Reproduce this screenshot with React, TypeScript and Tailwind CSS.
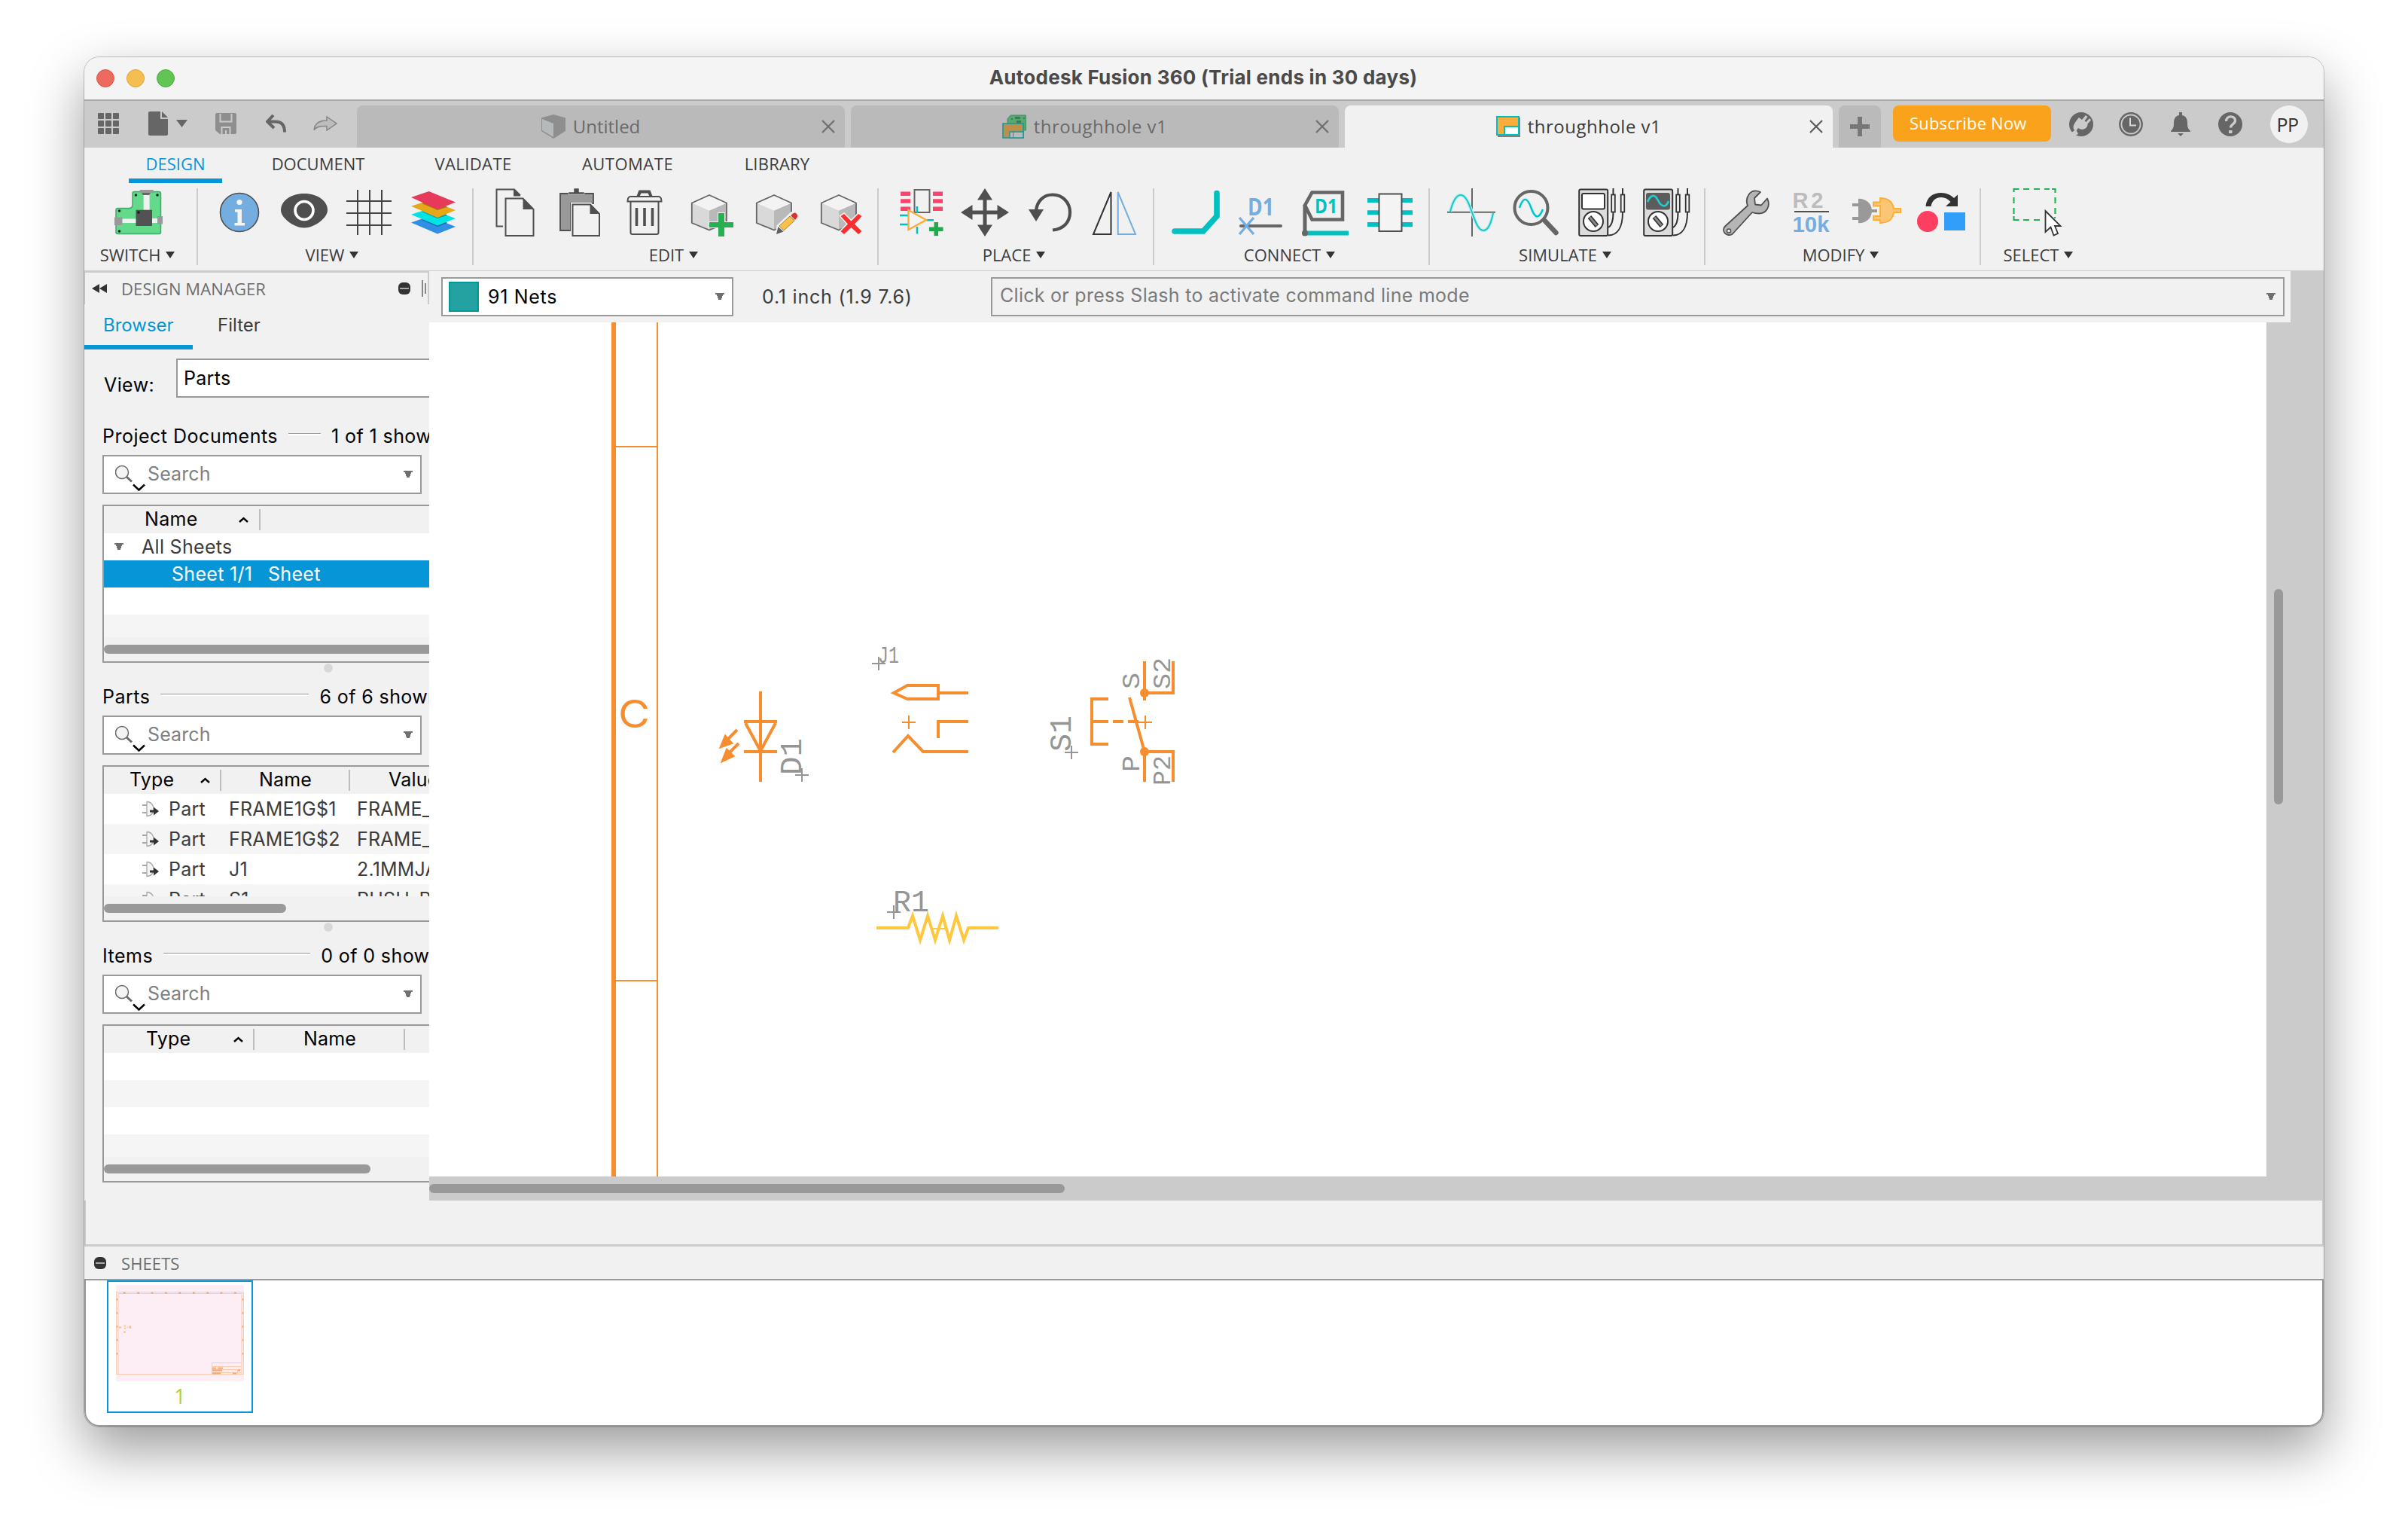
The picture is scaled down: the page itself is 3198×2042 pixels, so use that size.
import React from "react";

const G = "#4f4f4f";
const TEAL = "#00c0c0";
const SKY = "#74ade0";

type Kids = { children?: React.ReactNode };

function Ic({ children }: Kids) {
  return (
    <div className="flex w-[86px] justify-center">
      <svg className="h-16 w-16 overflow-visible" viewBox="0 0 64 64" fill="none">
        {children}
      </svg>
    </div>
  );
}

function Cube({ children }: Kids) {
  return (
    <Ic>
      <path d="M32 29.5L9 19.5V46L32 55.5z" fill="#d9d9d9" />
      <path d="M32 29.5L55 19.5V46L32 55.5z" fill="#b9b9b9" />
      <path d="M32 9L9 19.5l23 10 23-10z" fill="#f3f3f3" />
      <path d="M32 9L8.8 19.5V46L32 55.5 55 46V19.5z" stroke="#666" strokeWidth="1.8" strokeLinejoin="round" />
      {children}
    </Ic>
  );
}

function Meter({ scope }: { scope?: boolean }) {
  return (
    <Ic>
      <rect x="3.2" y="1.4" width="38" height="61.6" rx="2" fill="#dcdcdc" stroke="#333" strokeWidth="2" />
      <rect x="7" y="7" width="30" height="20.5" rx="2" fill={scope ? "#5c5c5c" : "#fff"} stroke={scope ? "#5c5c5c" : "#333"} strokeWidth="2" />
      {scope && <path d="M8 18C13 7 18 8 22 16S32 27 36 17" stroke="#1fd0d0" strokeWidth="2.6" />}
      <circle cx="22" cy="44" r="13" fill="#fff" stroke="#333" strokeWidth="2" />
      <path d="M17 38l10 12" stroke="#333" strokeWidth="6" />
      <path d="M17.5 38.6l9 10.8" stroke="#8a8a8a" strokeWidth="3" />
      <path d="M48.5 0v8M61 0v8M48.5 32C48.5 42 47 49 42 52M61 32C61 52 54 62.5 42 62.5" stroke="#333" strokeWidth="2" />
      <rect x="46.2" y="8.5" width="4.6" height="23" fill="#f1f1f1" stroke="#333" strokeWidth="1.8" />
      <rect x="58.7" y="8.5" width="4.6" height="23" fill="#f1f1f1" stroke="#333" strokeWidth="1.8" />
    </Ic>
  );
}

function Down() {
  return (
    <svg className="h-2.5 w-3 shrink-0" viewBox="0 0 12 10">
      <path d="M0 0h12v2h-2v2H9v3H8v2H4V7H3V4H2V2H0z" fill="#6f6f6f" />
    </svg>
  );
}

function Up() {
  return (
    <svg className="h-2 w-[13px] shrink-0" viewBox="0 0 13 8" fill="none">
      <path d="M1 7l5.5-5L12 7" stroke="#000" strokeWidth="2.4" />
    </svg>
  );
}

function Group({
  label,
  width,
  icons,
  className = "",
  shift = "pr-[5px]",
}: {
  label: string;
  width: string;
  icons: React.ReactNode;
  className?: string;
  shift?: string;
}) {
  return (
    <div className={`flex flex-col ${width}`}>
      <div className={`flex h-16 ${className}`}>{icons}</div>
      <div className={`mt-[13px] flex h-[22px] items-center justify-center gap-[7px] text-[22px] leading-none text-[#3c3c3c] ${shift}`}>
        <span>{label}</span>
        <svg className="h-[9px] w-3" viewBox="0 0 12 9">
          <path d="M0 0h12L6 9z" fill="#333" />
        </svg>
      </div>
    </div>
  );
}

const Sep = () => <div className="h-[102px] w-0.5 bg-[#cbcbcb]" />;

function Tab({ icon, text, active, tracking = "tracking-[0.5px]" }: { icon: React.ReactNode; text: string; active?: boolean; tracking?: string }) {
  return (
    <div className={`flex h-14 w-[648px] items-center rounded-t-lg pr-[13px] ${active ? "bg-[#f1f1f1] text-[#3c3c3c]" : "bg-[#bababa] text-[#6a6a6a]"}`}>
      <div className="flex flex-1 items-center justify-center gap-[10px] pl-[4px]">
        {icon}
        <span className={`text-[24px] leading-none ${tracking}`}>{text}</span>
      </div>
      <svg className="h-[18px] w-[18px]" viewBox="0 0 18 18">
        <path d="M1 1l16 16M17 1L1 17" stroke={active ? "#5a5a5a" : "#6f6f6f"} strokeWidth="2.2" />
      </svg>
    </div>
  );
}

function Ribbon() {
  return (
    <div className="h-[163px] bg-[#f1f1f1]">
      <div className="flex h-[47px] pl-[59px] text-[22px] leading-none text-[#3c3c3c]">
        <div className="flex w-[124px] justify-center border-b-[6px] border-[#0696d7] pt-[10px] text-[#0696d7]">DESIGN</div>
        <div className="ml-[42px] w-[171px] pt-[10px] text-center">DOCUMENT</div>
        <div className="ml-[44px] w-[153px] pt-[10px] text-center tracking-[0.4px]">VALIDATE</div>
        <div className="ml-[43px] w-[171px] pt-[10px] text-center tracking-[0.5px]">AUTOMATE</div>
        <div className="ml-[46px] w-[134px] pt-[10px] text-center tracking-[0.2px]">LIBRARY</div>
      </div>
      <div className="flex pt-[7px]">
        <Group
          label="SWITCH"
          width="w-[149px]"
          className="pl-[29px]"
          shift="pr-[8px]"
          icons={
            <Ic>
              <path d="M24 7q0-2.500 2.500-2.500H59q2.500 0 2.500 2.500V58q0 2.500-2.500 2.500H4.500Q2 60.500 2 58V29q0-2.500 2.500-2.500H20q4-.5 4-5z" fill="#62d98b" stroke="#43a869" strokeWidth="1.5" />
              <path d="M38.600 6h8v30h-8zM10 40.500h20V46H10zM50 40h7v6h-7z" fill="#f1f1f1" />
              <path d="M28.500 28.700H50V50H28.500z" fill="#525252" />
              <path d="M33.700 2h18v4h-18zM0 38.500h10.500v10.500H0zM57 37h7v10.500h-7z" fill="#999" />
              <path d="M36 6h12l-2 3h-8z" fill="#666" />
              <g fill="#1c1c1c"><circle cx="28.400" cy="9" r="1.800" /><circle cx="57" cy="9" r="1.800" /><circle cx="6.500" cy="30" r="1.800" /><circle cx="6.500" cy="57" r="1.800" /><circle cx="32" cy="32" r="1.800" /></g>
            </Ic>
          }
        />
        <Sep />
        <Group
          label="VIEW"
          width="w-[364px]"
          className="pl-[12px]"
          shift="pr-[8px]"
          icons={
            <>
              <Ic>
                <circle cx="32" cy="32" r="25.500" fill={SKY} stroke={G} strokeWidth="1.600" />
                <circle cx="32" cy="18.500" r="3.600" fill="#f4f4f4" />
                <path d="M26 28h9v18h4v3.500H25.500V46h4V31.500H26z" fill="#f4f4f4" />
              </Ic>
              <Ic>
                <path d="M1 29C1 17 14 7 32 7s31 10 31 22c0 10-17 23.500-31 23.500S1 39 1 29z" fill={G} />
                <circle cx="32" cy="29.500" r="12" fill={G} stroke="#fff" strokeWidth="3.600" />
              </Ic>
              <Ic>
                <path d="M17 2v60M33 2v60M49 2v60M2 17h60M2 33h60M2 49h60" stroke="#444" strokeWidth="2" />
              </Ic>
              <Ic>
                <path d="M2 45.500L26 37l35 14-24 9.500z" fill="#2f8fe6" />
                <path d="M16 42l21-6 13 10-13 5z" fill="#1d68ad" />
                <path d="M2 34.700L26 27l35 13-24 9.500z" fill="#00e3e3" />
                <path d="M16 31l21-6 13 11-13 4z" fill="#00a3a3" />
                <path d="M2 23.700L26 16l35 13-24 10z" fill="#e6a817" />
                <path d="M16 20l21-6 13 11-13 4z" fill="#a87607" />
                <path d="M2 12L25.600 4 61 18.500l-24 9.500z" fill="#e73a5b" />
              </Ic>
            </>
          }
        />
        <Sep />
        <Group
          label="EDIT"
          width="w-[536px]"
          className="pl-[12px]"
          icons={
            <>
              <Ic>
                <path d="M16 50.500H7.500V1.500H31l8 8" stroke={G} strokeWidth="2" />
                <path d="M30 1l9.500 9.500H30z" fill={G} />
                <path d="M19.500 13.500h23l14 14.500v35h-37z" stroke={G} strokeWidth="2" />
                <path d="M42.500 13v15H57z" fill={G} />
              </Ic>
              <Ic>
                <path d="M6 7h44v13H40l-20 0v36H6z" fill="#999" stroke={G} strokeWidth="1.800" />
                <path d="M17 8V5h7V0h7v5h7v3z" fill={G} stroke="#f1f1f1" strokeWidth="0.500" />
                <path d="M22.500 21.500H46L58 34v29H22.500z" fill="#f1f1f1" stroke="#f1f1f1" strokeWidth="5" />
                <path d="M22.500 21.500H46L58 34v29H22.500z" stroke={G} strokeWidth="2" />
                <path d="M45.500 21v13H58z" fill={G} />
              </Ic>
              <Ic>
                <path d="M21.500 10.500l3-8h15l3 8-4 0-2-4h-9l-2 4z" fill={G} />
                <path d="M9.500 17.500q0-6.500 4-6.500h37q4 0 4 6.500z" stroke={G} strokeWidth="2" />
                <path d="M13.500 17.500v41q0 2.500 2.500 2.500h32q2.500 0 2.500-2.500v-41" stroke={G} strokeWidth="2" />
                <path d="M21.500 26v24M32 26v24M42.500 26v24" stroke={G} strokeWidth="3.600" />
              </Ic>
              <Cube>
                <path d="M44 33h8v12h12v7H52v12h-8V52H32v-7h12z" fill="#27b050" stroke="#f1f1f1" strokeWidth="2" paintOrder="stroke" />
              </Cube>
              <Cube>
                <path d="M35 61l2-11 18-17q4-3 7 1 2 3-1 6L43 57z" fill="#f1f1f1" stroke="#f1f1f1" strokeWidth="3" />
                <path d="M39 50l14-13 6 6-14 13z" fill="#fbc04a" stroke="#a8823a" strokeWidth="1" />
                <path d="M54 36l3-2.500q3-2 5 .5 2.500 2.500 0 5.500L60 42z" fill="#d8322f" />
                <path d="M35 61l2.500-10 7 6.500z" fill="#5f5f5f" />
              </Cube>
              <Cube>
                <path d="M34.500 37l4.500-3 9.500 9.500L58 34l4.500 3-9.500 10.500L62.500 57 58 61l-9.500-9L39 61l-4.500-4 9.500-9.500z" fill="#fb2d2d" stroke="#f1f1f1" strokeWidth="3" paintOrder="stroke" />
              </Cube>
            </>
          }
        />
        <Sep />
        <Group
          label="PLACE"
          width="w-[364px]"
          className="pl-[12px]"
          icons={
            <>
              <Ic>
                <path d="M6 7.300h13M6 17h13M6 27.300h13M49 7.300h13M49 17h13M49 27.300h13" stroke="#ff426d" strokeWidth="5.500" />
                <path d="M24.500 2h20v30h-20z" stroke="#666" strokeWidth="2" />
                <path d="M28 24v9M28 51v9.500M5 36h11M5 48h11M41 42.300h9" stroke={TEAL} strokeWidth="2.500" />
                <path d="M16.500 29v26L40 42z" fill="#f4f4f4" stroke="#fbad35" strokeWidth="2.400" />
                <path d="M50.500 45h5.500v6.500h6.500V57H56v6h-5.500v-6H44v-5.500h6.500z" fill="#22a94c" />
              </Ic>
              <Ic>
                <path d="M32 0l10 15.500h-7.500v14h14V22L64 32 48.500 42v-7.500h-14v14H42L32 64 22 48.500h7.500v-14h-14V42L0 32l15.500-10v7.500h14v-14H22z" fill={G} />
              </Ic>
              <Ic>
                <path d="M14 30C15 17 24 8.500 36 8.500c13 0 23 10 23 23.500 0 13-9 22.500-23 23.500" stroke={G} strokeWidth="4.200" />
                <path d="M4 28h20L14 44z" fill={G} />
              </Ic>
              <Ic>
                <path d="M27.500 5v56H4z" stroke="#333" strokeWidth="2" />
                <path d="M36.700 5v56H60z" stroke={SKY} strokeWidth="2" />
              </Ic>
            </>
          }
        />
        <Sep />
        <Group
          label="CONNECT"
          width="w-[364px]"
          className="pl-[12px]"
          icons={
            <>
              <Ic>
                <path d="M60 6.500V37L42 57H4" stroke={TEAL} strokeWidth="7.600" strokeLinecap="round" />
              </Ic>
              <Ic>
                <path d="M6 50h53" stroke="#666" strokeWidth="4" strokeLinecap="round" />
                <path d="M4 39l19 22M23 39L4 61" stroke={SKY} strokeWidth="3.400" />
                <text x="15" y="35.500" fontSize="32" fontWeight="700" fill={SKY} textLength="35" lengthAdjust="spacingAndGlyphs">D1</text>
              </Ic>
              <Ic>
                <path d="M5 22.500l9.500-17H55v36H14.500z" stroke="#666" strokeWidth="4.600" />
                <path d="M5 22v37" stroke="#666" strokeWidth="5" />
                <path d="M2 59.500h61" stroke={TEAL} strokeWidth="6" />
                <circle cx="5" cy="59.500" r="4" fill="#666" />
                <text x="18" y="32.500" fontSize="26" fontWeight="700" fill={TEAL} textLength="30" lengthAdjust="spacingAndGlyphs">D1</text>
              </Ic>
              <Ic>
                <path d="M2 16h15M2 32.300h15M2 48h15M47 16h15M47 32.300h15M47 48h15" stroke={TEAL} strokeWidth="6" />
                <path d="M17.500 7.500h30v49.500h-30z" fill="#f4f4f4" stroke={G} strokeWidth="2" />
              </Ic>
            </>
          }
        />
        <Sep />
        <Group
          label="SIMULATE"
          width="w-[364px]"
          className="pl-[12px]"
          icons={
            <>
              <Ic>
                <path d="M33 0v64M0 31.700h64" stroke="#666" strokeWidth="2" />
                <path d="M4 31C8 15 13 9 18 9c7 0 11 12 15 23s8 24 15 24c6 0 10-8 13-23" stroke="#b4efef" strokeWidth="4.500" />
                <path d="M4 31C8 15 13 9 18 9c7 0 11 12 15 23s8 24 15 24c6 0 10-8 13-23" stroke="#1fc7c7" strokeWidth="2" />
              </Ic>
              <Ic>
                <circle cx="25.500" cy="26" r="22" stroke="#666" strokeWidth="4" />
                <path d="M44 43.500L58.500 59" stroke="#666" strokeWidth="6.500" strokeLinecap="round" />
                <path d="M10 26c5-15 10-15 15.500 0s10 15 15.500 2" stroke="#b4efef" strokeWidth="4" />
                <path d="M10 26c5-15 10-15 15.500 0s10 15 15.500 2" stroke={TEAL} strokeWidth="2.200" />
              </Ic>
              <Meter />
              <Meter scope />
            </>
          }
        />
        <Sep />
        <Group
          label="MODIFY"
          width="w-[364px]"
          className="pl-[12px]"
          icons={
            <>
              <Ic>
                <path d="M50 5L42 13l1 8.500 8 1 8-9c5 10-1 20-11 20-3 0-6-.5-9-1.500L13 60.500C9 64 1 61 1 55c0-2 1-3.500 2-4.500L33 23c-4-10 3-24 17-18z" fill="#b5b5b5" stroke={G} strokeWidth="1.800" strokeLinejoin="round" />
                <circle cx="8" cy="56.500" r="2.600" fill="#f1f1f1" stroke={G} strokeWidth="1.500" />
              </Ic>
              <Ic>
                <text x="6.500" y="25.500" fontSize="29" fontWeight="700" fill="#bcbcbc" textLength="41" lengthAdjust="spacing" className="font-['Liberation_Sans']">R2</text>
                <path d="M9 31h46" stroke={G} strokeWidth="2" />
                <text x="6.500" y="58" fontSize="30" fontWeight="700" fill={SKY} textLength="49" lengthAdjust="spacingAndGlyphs" className="font-['Liberation_Sans']">10k</text>
              </Ic>
              <Ic>
                <path d="M0 20h8v-6.300c24 0 24 32.600 0 32.600V42H0v-4h8V24H0zM25 28h8v4h-8z" fill="#999" />
                <path d="M28 18.500h9V13c14 0 17 8 18 14h9v5h-9c-1 8-5 14-18 14v-4h-9v-5h9V23.500h-9z" fill="#fcc573" stroke="#fbad35" strokeWidth="1.800" />
              </Ic>
              <Ic>
                <circle cx="14" cy="44" r="14" fill="#ff3f62" />
                <path d="M36 32h28v24H36z" fill="#339efa" />
                <path d="M11.500 24C12.500 12 21 6 32 6c7 0 13 3 17 7l5-4.500V24H38l6.500-6C41 14 37 12 32 12c-7 0-12 4-13.500 12z" fill="#333" />
              </Ic>
            </>
          }
        />
        <Sep />
        <Group
          label="SELECT"
          width="w-[160px]"
          className="pl-[31px]"
          shift="pr-[8px]"
          icons={
            <Ic>
              <path d="M1.500 5V1h7M14 1h8M28 1h8M42 1h7M52 1h4.500v5M56.500 12v8M56.500 26v8M1.500 12v8M1.500 26v8M1.500 37v5h7M14 42h8M28 42h8M56 38v2" stroke="#25b154" strokeWidth="2.200" />
              <path d="M43.500 30v28l7-6.500 4 11 5.500-2.500-4-10h7.500z" fill="#fff" stroke="#333" strokeWidth="1.800" />
            </Ic>
          }
        />
      </div>
    </div>
  );
}

const Minus = () => (
  <svg className="h-4 w-4 shrink-0" viewBox="0 0 16 16">
    <rect width="16" height="16" rx="6" fill="#333" />
    <path d="M2 8h12" stroke="#aaa" strokeWidth="2" />
  </svg>
);

function SearchBox() {
  return (
    <div className="flex h-[52px] w-[424px] items-center border-2 border-[#999] bg-white pr-[10px] pl-[15px]">
      <svg className="mt-[10px] h-9 w-10 shrink-0" viewBox="0 0 40 36" fill="none">
        <circle cx="9" cy="10" r="8.500" fill="#f4f4f4" stroke="#6a6a6a" strokeWidth="1.500" />
        <path d="M15 16l7 6.500" stroke="#6a6a6a" strokeWidth="3" />
        <path d="M24 26.500l7.500 7 7.500-7" stroke="#000" strokeWidth="2.400" />
      </svg>
      <span className="ml-[3px] flex-1 pb-px text-[25px] leading-none tracking-[0.1px] text-[#808080]">Search</span>
      <Down />
    </div>
  );
}

function SectionHead({ title, count, line }: { title: string; count: string; line: string }) {
  return (
    <div className="flex h-6 items-center text-[25px] leading-none whitespace-nowrap text-black">
      <span className="tracking-[0.5px]">{title}</span>
      <div className={`mb-[6px] h-[3px] shrink-0 border-t border-[#999] bg-white ${line}`} />
      <span className="ml-[14px] tracking-[0.4px]">{count}</span>
    </div>
  );
}

const Bar = () => <div className="h-7 w-0.5 shrink-0 bg-[#bdbdbd]" />;

const Dot = () => <div className="ml-[294px] h-3 w-3 rounded-full bg-[#d8d8d8]" />;

function PartRow({ name, value, bg }: { name: string; value: string; bg: string }) {
  return (
    <div className={`flex h-10 shrink-0 items-center text-[#3c3c3c] ${bg}`}>
      <svg className="ml-[51px] h-[22px] w-[22px] shrink-0" viewBox="0 0 22 22" fill="none">
        <path d="M0 6h6M0 16h6" stroke="#8a8a8a" strokeWidth="1.500" />
        <path d="M6 1.500v19c12 0 12-19 0-19z" fill="#f4f4f4" stroke="#aaa" strokeWidth="1.300" />
        <path d="M10 12.500h5V8.500l7 5.500-7 5.500v-4h-5z" fill="#333" />
      </svg>
      <span className="ml-[13px] w-[80px] shrink-0">Part</span>
      <span className="w-[170px] shrink-0">{name}</span>
      <span className="whitespace-nowrap">{value}</span>
    </div>
  );
}

function Manager() {
  return (
    <div className="flex h-[1234px] w-[458px] shrink-0 flex-col overflow-hidden bg-[#f1f1f1] font-['Inter',sans-serif]">
      <div className="flex h-11 items-center border-t-2 border-r-2 border-l border-[#cbcbcb] pr-[1px] pl-[9px]">
        <svg className="h-3 w-5" viewBox="0 0 20 12">
          <path d="M0 6L10 0v12zM10 6L20 0v12z" fill="#333" />
        </svg>
        <span className="ml-[19px] flex-1 font-['Open_Sans',sans-serif] text-[22px] leading-none tracking-[0.1px] text-[#6c6c6c]">DESIGN MANAGER</span>
        <Minus />
        <div className="ml-[15px] h-[22px] w-0.5 bg-[#888]" />
        <div className="mr-[1px] ml-[2px] h-[14px] w-0.5 bg-[#888]" />
      </div>
      <div className="flex h-[60px] text-[24px] leading-none">
        <div className="w-36 border-b-[6px] border-[#0696d7] pt-4 pl-[25px] text-[#0696d7]">Browser</div>
        <div className="pt-4 pl-[33px] text-[#3c3c3c]">Filter</div>
      </div>
      <div className="mt-3 flex h-[52px] items-center pl-[26px] text-[25px] leading-none text-black">
        <span className="mt-[18px] w-24 tracking-[0.4px]">View:</span>
        <div className="flex h-[52px] flex-1 items-center border-2 border-r-0 border-[#999] bg-white pl-[8px] text-[25px] tracking-[0.3px]">Parts</div>
      </div>
      <div className="pt-[39px] pl-6">
        <SectionHead title="Project Documents" count="1 of 1 shown" line="ml-[14px] w-[43px]" />
        <div className="mt-[13px]">
          <SearchBox />
        </div>
        <div className="mt-[14px] flex h-[210px] flex-col border-2 border-r-0 border-[#999] bg-[#f1f1f1] text-[25px] leading-none tracking-[0.3px] text-[#3c3c3c]">
          <div className="flex h-9 shrink-0 items-center text-black">
            <span className="ml-[54px] w-[125px] pb-px">Name</span>
            <Up />
            <div className="ml-[14px]" />
            <Bar />
          </div>
          <div className="flex h-9 shrink-0 items-center bg-white pl-[14px]">
            <Down />
            <span className="ml-[24px]">All Sheets</span>
          </div>
          <div className="flex h-9 shrink-0 items-center bg-[#0696d7] pl-[90px] text-white">
            <span className="w-[128px]">Sheet 1/1</span>
            <span>Sheet</span>
          </div>
          <div className="h-9 shrink-0 bg-white" />
          <div className="h-[30px] shrink-0 bg-[#f5f5f5]" />
          <div className="mt-[10px] -mr-4 h-3 shrink-0 rounded-full bg-[#999]" />
        </div>
        <div className="pt-[1px]">
          <Dot />
        </div>
      </div>
      <div className="pt-[20px] pl-6">
        <SectionHead title="Parts" count="6 of 6 shown" line="ml-[14px] w-[197px]" />
        <div className="mt-[13px]">
          <SearchBox />
        </div>
        <div className="mt-[14px] flex h-[208px] flex-col border-2 border-r-0 border-[#999] bg-[#f1f1f1] text-[25px] leading-none tracking-[0.2px]">
          <div className="flex h-9 shrink-0 items-center text-black">
            <span className="ml-[34px] w-[94px] shrink-0 pb-px">Type</span>
            <Up />
            <div className="w-[13px] shrink-0" />
            <Bar />
            <span className="ml-[50px] w-[119px] shrink-0 pb-px">Name</span>
            <Bar />
            <span className="ml-[51px] shrink-0 pb-px">Value</span>
          </div>
          <div className="flex h-[136px] shrink-0 flex-col overflow-hidden">
            <PartRow name="FRAME1G$1" value="FRAME_A_L" bg="bg-white" />
            <PartRow name="FRAME1G$2" value="FRAME_A_L" bg="bg-[#f5f5f5]" />
            <PartRow name="J1" value="2.1MMJACK" bg="bg-white" />
            <PartRow name="S1" value="PUSH_BUTTON" bg="bg-[#f5f5f5]" />
          </div>
          <div className="mt-[10px] h-3 w-[242px] shrink-0 rounded-full bg-[#999]" />
        </div>
        <div className="pt-[1px]">
          <Dot />
        </div>
      </div>
      <div className="pt-[20px] pl-6">
        <SectionHead title="Items" count="0 of 0 shown" line="ml-[14px] w-[195px]" />
        <div className="mt-[13px]">
          <SearchBox />
        </div>
        <div className="mt-[14px] flex h-[210px] flex-col border-2 border-r-0 border-[#999] bg-[#f1f1f1] text-[25px] leading-none tracking-[0.2px]">
          <div className="flex h-9 shrink-0 items-center text-black">
            <span className="ml-[56px] w-[116px] shrink-0 pb-px">Type</span>
            <Up />
            <div className="w-[13px] shrink-0" />
            <Bar />
            <span className="ml-[65px] w-[133px] shrink-0 pb-px">Name</span>
            <Bar />
          </div>
          <div className="h-9 shrink-0 bg-white" />
          <div className="h-9 shrink-0 bg-[#f5f5f5]" />
          <div className="h-9 shrink-0 bg-white" />
          <div className="h-[30px] shrink-0 bg-[#f5f5f5]" />
          <div className="mt-[10px] h-3 w-[354px] shrink-0 rounded-full bg-[#999]" />
        </div>
      </div>
    </div>
  );
}

function Cross({ x, y, c }: { x: number; y: number; c: string }) {
  return <path d={`M${x - 9} ${y}h18M${x} ${y - 9}v18`} stroke={c} strokeWidth="2" />;
}

function VText({ x, y, size, len, children }: { x: number; y: number; size: number; len: number; children: string }) {
  return (
    <text transform={`translate(${x} ${y}) rotate(-90)`} fontSize={size} textLength={len} lengthAdjust="spacingAndGlyphs" fill="#959595">
      {children}
    </text>
  );
}

/* Schematic sheet, in window pixel units. */
function Schematic() {
  const gray = "#959595";
  const or = "#f68e2f";
  return (
    <svg className="h-[1134px] w-[2440px] shrink-0 bg-white font-['Liberation_Mono',monospace]" viewBox="570 428 2440 1134" fill="none">
      <g stroke={or} strokeWidth="4">
        <path d="M815 428v1134" strokeWidth="6" />
        <path d="M873 428v1134M818 593h54M818 1302h54" strokeWidth="2" />
        <path d="M1010 918v120M988 958h44M988 998h44M990 960l20 37 20-37" />
        <path d="M979 969l-14 14M981 987l-14 14" />
        <path d="M963 976l10 11-17 6zM965 994l10 10-17 8z" fill={or} strokeWidth="1.500" />
        <path d="M1187 920l18-10h41v18h-41zM1246 920h40M1286 958h-40v22M1186 999l20-22 20 21h60" />
        <path d="M1472 928h-22v60h22M1450 958h22M1478 958h14M1498 958h14M1500 926l20 72" />
        <path d="M1520 878v52M1520 920h38v-42M1520 1038v-40h38v40" />
      </g>
      <circle cx="1520" cy="920" r="6" fill={or} />
      <circle cx="1520" cy="998" r="6" fill={or} />
      <Cross x={1207} y={959} c={or} />
      <Cross x={1521} y={959} c={or} />
      <path d="M1164 1232h42l6-16 10 32 10-32 10 32 10-32 9 32 9-32 10 32 6-16h40" stroke="#fec73d" strokeWidth="4" />
      <path d="M1238 1233h18" stroke="#fec73d" strokeWidth="2" />
      <Cross x={1065} y={1029} c={gray} />
      <Cross x={1167} y={881} c={gray} />
      <Cross x={1423} y={999} c={gray} />
      <Cross x={1187} y={1211} c={gray} />
      <text x="821" y="965.500" fontSize="51" fill={or} textLength="42" lengthAdjust="spacingAndGlyphs" className="font-['Inter'] font-normal">C</text>
      <text x="1166" y="880" fontSize="31" fill={gray} textLength="28" lengthAdjust="spacingAndGlyphs">J1</text>
      <text x="1186" y="1210" fontSize="41" fill={gray} textLength="48" lengthAdjust="spacingAndGlyphs">R1</text>
      <VText x={1064} y={1029} size={41} len={49}>D1</VText>
      <VText x={1422} y={998} size={41} len={48}>S1</VText>
      <VText x={1513} y={915} size={34} len={22}>S</VText>
      <VText x={1554} y={915} size={34} len={42}>S2</VText>
      <VText x={1513} y={1025} size={34} len={22}>P</VText>
      <VText x={1554} y={1043} size={34} len={40}>P2</VText>
    </svg>
  );
}

function Thumb() {
  const o = "#f8a56c";
  return (
    <svg className="h-32 w-[170px]" viewBox="0 0 170 128" fill="none">
      <path d="M0 0h170v128H0z" fill="#fdeef5" />
      <path d="M.7 9.500h168.600v109H.7zM3 11.500h164v107H3z" stroke="#fbc9ac" />
      <path d="M127.500 118v-14.500H167M127.500 108.500H167M127.500 112.500H167M127.500 116.500H167M161.500 112v6" stroke="#fbc9ac" />
      <path d="M10 10.500h153" stroke={o} strokeWidth="2" strokeDasharray="2.500 15.900" />
      <path d="M1.500 18v84M168.500 18v84" stroke={o} strokeWidth="1.600" strokeDasharray="2.500 15.500" />
      <path d="M128 110.500h5M135 110.500h7M128 113.500h13M128 117.500h11M155 117.500h5M162 113.500h3" stroke={o} strokeWidth="1.800" />
      <path d="M4 56.500h3M10.500 54.500h2.500M11 57.500h2M15 56.500h1M17.500 55h2.500M17.500 57h3M10 62.500h3" stroke={o} strokeWidth="1.600" opacity="0.800" />
    </svg>
  );
}

export default function App() {
  return (
    <div className="h-[2042px] w-[3198px] overflow-hidden bg-white px-[112px] pt-[76px] font-['Open_Sans',sans-serif]">
      <div className="flex h-[1818px] w-[2974px] flex-col overflow-hidden rounded-[20px] bg-[#f1f1f1] shadow-[0_0_0_1px_rgba(0,0,0,0.22),0_30px_72px_rgba(0,0,0,0.4)]">
        <div className="flex h-[58px] shrink-0 items-center border-b-2 border-[#a8a8a8] bg-[#f4f4f4] pl-4">
          <div className="flex w-[200px] gap-4">
            <div className="h-6 w-6 rounded-full border border-[#d8564c] bg-[#ed6a5f]" />
            <div className="h-6 w-6 rounded-full border border-[#dba13c] bg-[#f6be50]" />
            <div className="h-6 w-6 rounded-full border border-[#51a93f] bg-[#61c554]" />
          </div>
          <div className="flex-1 pr-[218px] pb-[3px] text-center font-['Inter',sans-serif] text-[26px] leading-none font-bold tracking-[0.25px] text-[#4a4a4a]">
            Autodesk Fusion 360 (Trial ends in 30 days)
          </div>
        </div>

        <div className="flex h-[62px] shrink-0 items-end bg-[#cbcbcb]">
          <div className="flex h-14 w-[362px] items-center pb-[8px] pl-[18px] text-[#666]">
            <svg className="h-7 w-7" viewBox="0 0 28 28" fill="#666">
              {[0, 10, 20].map((y) => [0, 10, 20].map((x) => <rect key={`${x}-${y}`} x={x} y={y} width="8" height="8" rx="1" />))}
            </svg>
            <svg className="ml-[39px] h-8 w-[26px]" viewBox="0 0 26 32">
              <path d="M2 0h14v10h10v20q0 2-2 2H2q-2 0-2-2V2q0-2 2-2zM18 0l8 8h-8z" fill="#666" />
            </svg>
            <svg className="ml-[11px] h-[10px] w-[15px]" viewBox="0 0 15 10">
              <path d="M0 0h15L7.500 10z" fill="#666" />
            </svg>
            <svg className="ml-[37px] h-7 w-7" viewBox="0 0 28 28">
              <path d="M2 0h24q2 0 2 2v24q0 2-2 2H6l-6-5V2q0-2 2-2z" fill="#8e8e8e" />
              <path d="M6.500 1v10.500h15V1M8.500 28v-9h11v9" stroke="#cbcbcb" strokeWidth="2" fill="none" />
              <path d="M13 23h2v5h-2z" fill="#cbcbcb" />
            </svg>
            <svg className="ml-[39px] h-6 w-[27px]" viewBox="0 0 27 24" fill="none">
              <path d="M10 1L2 9.500 11 18M3 9.500h10c8 0 12 5 12 14" stroke="#666" strokeWidth="4" />
            </svg>
            <svg className="ml-[36px] h-5 w-8" viewBox="0 0 32 20">
              <path d="M18 1l13 9-13 9v-5.500C10 13 4 14 1 18.500 2 10 8 6 18 6z" fill="#bdbdbd" stroke="#858585" strokeWidth="1.500" />
            </svg>
          </div>
          <div className="flex gap-2">
            <Tab
              text="Untitled"
              tracking="tracking-[0px]"
              icon={
                <svg className="h-8 w-8" viewBox="0 0 32 32">
                  <path d="M0 4.500L16 0l16 4.500V22L16 32 0 22z" fill="#8e8e8e" />
                  <path d="M1 6l15 6v18L1 21z" fill="#b5b9b9" />
                </svg>
              }
            />
            <Tab
              text="throughhole v1"
              icon={
                <svg className="h-8 w-8" viewBox="0 0 32 32">
                  <path d="M11 1h20.500v20H7V6z" fill="#57a873" stroke="#3f9160" />
                  <path d="M12 5h2v2h-2zM17 3h7v3h-7zM28 4h2v2h-2zM19 8h6v4h-6z" fill="#3b7d55" />
                  <path d="M1 12h27v19H1z" fill="#bd8f4a" stroke="#159a9a" strokeWidth="1.600" />
                  <path d="M10 23h18v8H10z" fill="#bababa" stroke="#159a9a" strokeWidth="1.400" />
                  <path d="M14.500 23v8" stroke="#159a9a" />
                </svg>
              }
            />
            <Tab
              active
              text="throughhole v1"
              icon={
                <svg className="h-7 w-8" viewBox="0 0 32 28">
                  <path d="M2 2h30v26H2z" fill="#808080" />
                  <path d="M1 1h29v24H1z" fill="#fbad3b" stroke={TEAL} strokeWidth="2" />
                  <path d="M11 14h19v11H11z" fill="#fff" stroke={TEAL} strokeWidth="2" />
                </svg>
              }
            />
            <div className="flex h-14 w-14 items-center justify-center rounded-t-lg bg-[#bababa]">
              <svg className="h-[26px] w-[26px]" viewBox="0 0 26 26">
                <path d="M13 0v26M0 13h26" stroke="#777" strokeWidth="6" />
              </svg>
            </div>
          </div>
          <div className="mb-2 ml-4 flex h-12 w-[210px] items-center rounded-lg bg-[#faa21b] pb-[2px] pl-[22px] text-[22px] leading-none tracking-[0.2px] text-white">Subscribe Now</div>
          <div className="mb-[6px] flex h-[50px] items-center">
            <svg className="ml-6 h-8 w-8" viewBox="0 0 32 32" fill="none">
              <circle cx="16" cy="16" r="16" fill="#666" />
              <path d="M7 24C3 19 8 13 13 7l4 3 5-6 2.500 2-4 5.500 2 1.500 4.500-5 2 2.500-4.500 5C25 22 17 25 12 21l-3.500 5z" fill="#cbcbcb" />
              <path d="M3 27l6-4 3 6-5 2z" fill="#cbcbcb" />
            </svg>
            <svg className="ml-[34px] h-8 w-8" viewBox="0 0 32 32" fill="none">
              <circle cx="16" cy="16" r="14.700" stroke="#666" strokeWidth="2.400" />
              <circle cx="16" cy="16" r="11.600" fill="#666" />
              <path d="M15 7.500v10h8" stroke="#d8d8d8" strokeWidth="2" />
            </svg>
            <svg className="ml-[37px] h-8 w-[26px]" viewBox="0 0 26 32" fill="#666">
              <path d="M11 0h4v4c5 1 7 5 7 10 0 6 1 8 4 11v1H0v-1c3-3 4-5 4-11 0-5 2-9 7-10zM9 28h8l-4 4z" />
            </svg>
            <svg className="ml-[37px] h-8 w-8" viewBox="0 0 32 32" fill="none">
              <circle cx="16" cy="16" r="16" fill="#666" />
              <path d="M10.500 12c0-8 12-8 12-1 0 5-6 4.500-6 9.500" stroke="#cbcbcb" strokeWidth="3.400" />
              <path d="M14 24h4.500v4H14z" fill="#cbcbcb" />
            </svg>
            <div className="ml-[37px] flex h-[50px] w-[50px] items-center justify-center overflow-hidden rounded-full bg-[#f1f1f1] pr-1 text-[25px] leading-none tracking-[-0.5px] text-[#333]">PP</div>
          </div>
        </div>

        <Ribbon />

        <div className="flex h-[1235px] shrink-0 border-t border-[#cbcbcb]">
          <Manager />
          <div className="flex flex-1 flex-col bg-[#cbcbcb]">
            <div className="flex h-[68px] w-[2472px] shrink-0 items-center bg-[#f1f1f1] pl-4 font-['Inter',sans-serif] text-[25px] leading-none">
              <div className="flex h-[52px] w-[388px] items-center border-2 border-[#999] bg-white pr-[10px] pl-2">
                <div className="h-10 w-10 border-2 border-[#009999] bg-[#24a2a2]" />
                <span className="flex-1 pl-3 tracking-[0.7px] text-black">91 Nets</span>
                <Down />
              </div>
              <span className="ml-[38px] w-[304px] tracking-[0.8px] text-[#3c3c3c]">0.1 inch (1.9 7.6)</span>
              <div className="flex h-[52px] w-[1718px] items-center border-2 border-[#999] pr-[10px] pl-[10px]">
                <span className="flex-1 pb-[3px] tracking-[0.28px] text-[#7a7a7a]">Click or press Slash to activate command line mode</span>
                <Down />
              </div>
            </div>
            <div className="flex h-[1134px]">
              <Schematic />
              <div className="mt-[354px] ml-[10px] h-[286px] w-3 rounded-full bg-[#999]" />
            </div>
            <div className="mt-[10px] h-3 w-[844px] rounded-full bg-[#999]" />
          </div>
        </div>

        <div className="h-[61px] shrink-0 border-x-2 border-b-[3px] border-[#cbcbcb] bg-[#f1f1f1]" />
        <div className="flex h-[45px] shrink-0 items-center border-b-2 border-[#999] pl-[13px]">
          <Minus />
          <span className="ml-[20px] text-[22px] leading-none tracking-[0.1px] text-[#6c6c6c]">SHEETS</span>
        </div>
        <div className="h-[194px] shrink-0 rounded-b-[20px] border-x-2 border-b-2 border-[#999] bg-white pl-7">
          <div className="flex h-[176px] w-[194px] flex-col items-center border-2 border-[#0696d7] bg-white pt-1">
            <Thumb />
            <span className="mt-[6px] text-[27px] leading-none text-[#b0d136]">1</span>
          </div>
        </div>
      </div>
    </div>
  );
}
